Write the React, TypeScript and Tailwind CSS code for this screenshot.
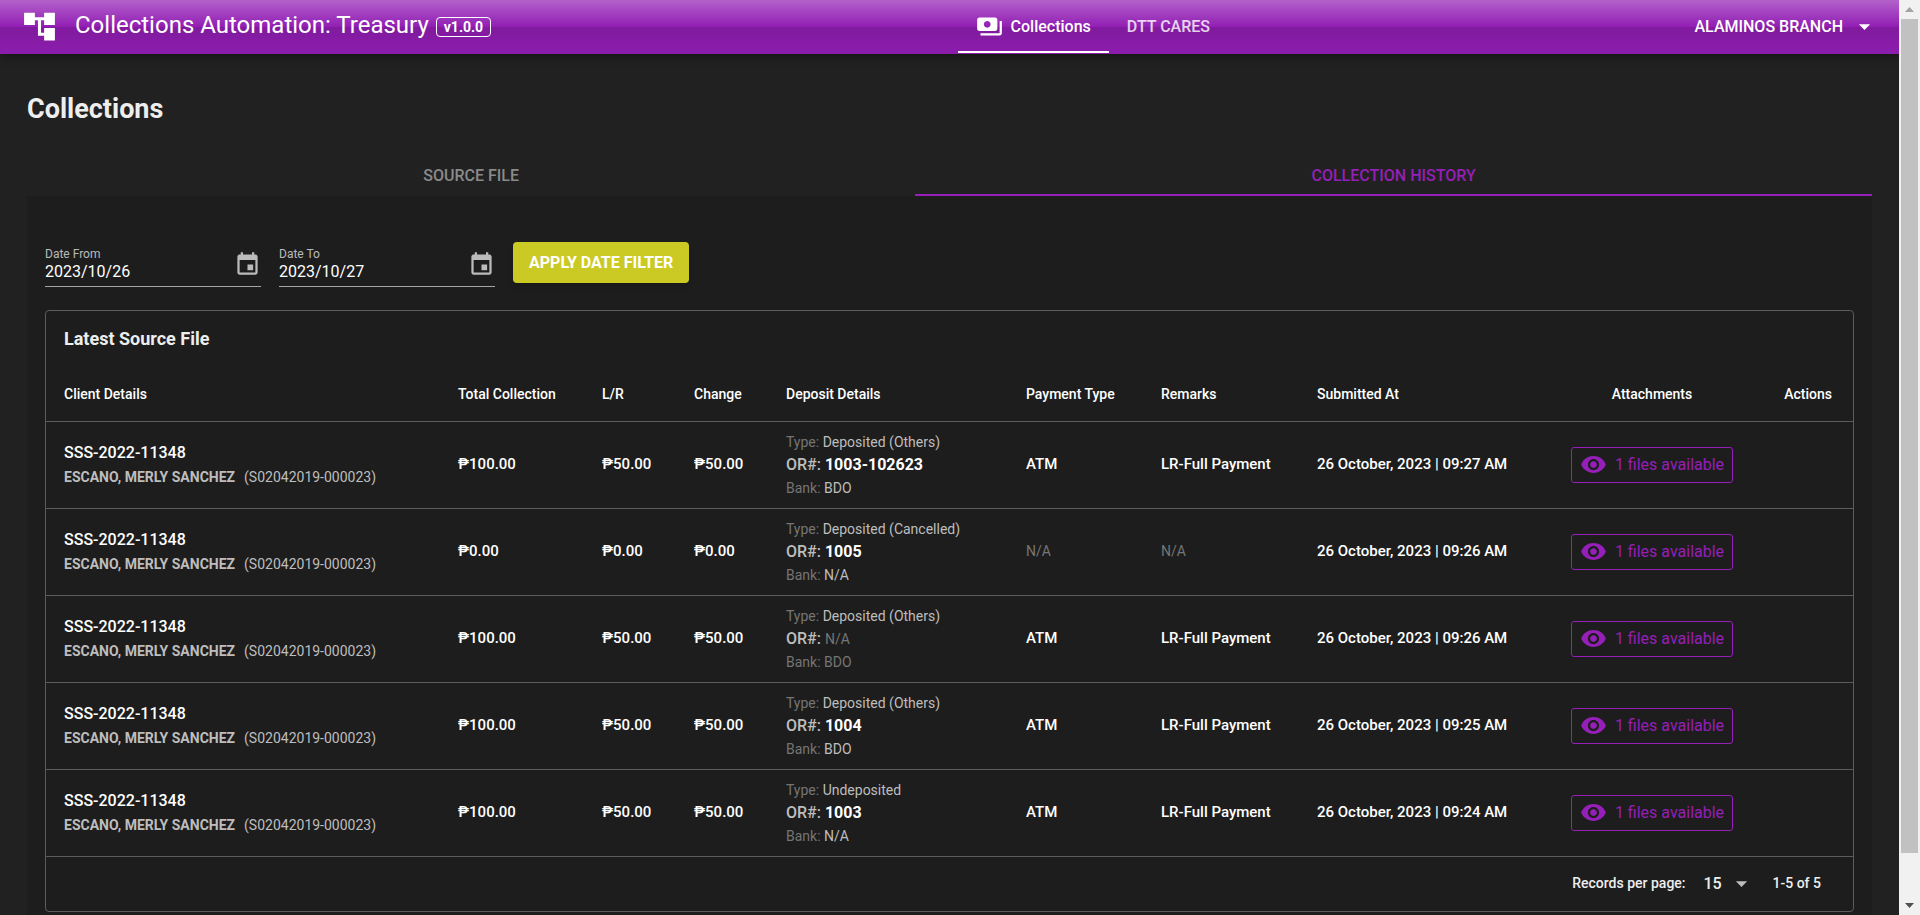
import { useState } from "react";

type Row = {
  total: string;
  lr: string;
  change: string;
  type: string;
  or: string | null;
  bank: string;
  payment: string | null;
  remarks: string | null;
  time: string;
};

const rows: Row[] = [
  { total: "₱100.00", lr: "₱50.00", change: "₱50.00", type: "Deposited (Others)", or: "1003-102623", bank: "BDO", payment: "ATM", remarks: "LR-Full Payment", time: "09:27 AM" },
  { total: "₱0.00", lr: "₱0.00", change: "₱0.00", type: "Deposited (Cancelled)", or: "1005", bank: "N/A", payment: null, remarks: null, time: "09:26 AM" },
  { total: "₱100.00", lr: "₱50.00", change: "₱50.00", type: "Deposited (Others)", or: null, bank: "BDO", payment: "ATM", remarks: "LR-Full Payment", time: "09:26 AM" },
  { total: "₱100.00", lr: "₱50.00", change: "₱50.00", type: "Deposited (Others)", or: "1004", bank: "BDO", payment: "ATM", remarks: "LR-Full Payment", time: "09:25 AM" },
  { total: "₱100.00", lr: "₱50.00", change: "₱50.00", type: "Undeposited", or: "1003", bank: "N/A", payment: "ATM", remarks: "LR-Full Payment", time: "09:24 AM" },
];

const columns = [
  { label: "Client Details", className: "w-[400px] pl-[18px] text-left" },
  { label: "Total Collection", className: "w-[144px] pl-3 text-left" },
  { label: "L/R", className: "w-[92px] pl-3 text-left" },
  { label: "Change", className: "w-[92px] pl-3 text-left" },
  { label: "Deposit Details", className: "w-[240px] pl-3 text-left" },
  { label: "Payment Type", className: "w-[135px] pl-3 text-left" },
  { label: "Remarks", className: "w-[156px] pl-3 text-left" },
  { label: "Submitted At", className: "w-[244px] pl-3 text-left" },
  { label: "Attachments", className: "w-[206px] text-center" },
  { label: "Actions", className: "w-[99px] pr-[22px] text-right" },
];

function Icon({ d, className }: { d: string; className: string }) {
  return (
    <svg viewBox="0 0 24 24" fill="currentColor" aria-hidden="true" className={className}>
      <path d={d} />
    </svg>
  );
}

const icons = {
  tree: "M22 11V3h-7v3H9V3H2v8h7V8h2v10h4v3h7v-8h-7v3h-2V8h2v3z",
  payments: "M19 14V6c0-1.100-.9-2-2-2H3c-1.100 0-2 .9-2 2v8c0 1.100.9 2 2 2h14c1.100 0 2-.9 2-2zm-9-1c-1.660 0-3-1.340-3-3s1.340-3 3-3 3 1.340 3 3-1.340 3-3 3zm13-6v11c0 1.100-.9 2-2 2H4v-2h17V7h2z",
  event: "M17 12h-5v5h5v-5zM16 1v2H8V1H6v2H5c-1.110 0-1.990.9-1.990 2L3 19c0 1.100.89 2 2 2h14c1.100 0 2-.9 2-2V5c0-1.100-.9-2-2-2h-1V1h-2zm3 18H5V8h14v11z",
  eye: "M12 4.500C7 4.500 2.730 7.610 1 12c1.730 4.390 6 7.500 11 7.500s9.270-3.110 11-7.500c-1.730-4.390-6-7.500-11-7.500zM12 17c-2.760 0-5-2.240-5-5s2.240-5 5-5 5 2.240 5 5-2.240 5-5 5zm0-8c-1.660 0-3 1.340-3 3s1.340 3 3 3 3-1.340 3-3-1.340-3-3-3z",
  down: "M7 10l5 5 5-5z",
};

function Header() {
  return (
    <header className="relative z-10 flex h-[54px] shrink-0 items-stretch justify-between bg-[#921eb4] bg-[linear-gradient(to_bottom,rgba(255,255,255,0.3),rgba(255,255,255,0)_50%,rgba(0,0,0,0.12)_51%,rgba(0,0,0,0.04))] px-[21px] pb-px text-white shadow-[0_2px_10px_rgba(0,0,0,0.45)]">
      <div className="flex items-center">
        <Icon d={icons.tree} className="size-[37px]" />
        <span className="ml-[17px] pb-1 text-2xl">Collections Automation: Treasury</span>
        <span className="ml-[7px] rounded-[4px] border border-white px-[7px] text-[14px] leading-[18px] font-bold">v1.0.0</span>
      </div>
      <nav className="flex items-stretch text-base font-medium">
        <a href="#collections" className="flex items-center gap-2 border-b-2 border-white px-[18px] pt-[2px]">
          <Icon d={icons.payments} className="size-[27px]" />
          Collections
        </a>
        <a href="#cares" className="flex items-center px-[18px] text-white/80">DTT CARES</a>
      </nav>
      <button type="button" className="flex items-center gap-2 text-base font-medium">
        ALAMINOS BRANCH
        <Icon d={icons.down} className="size-[27px]" />
      </button>
    </header>
  );
}

function DateField({ id, label, initial }: { id: string; label: string; initial: string }) {
  const [value, setValue] = useState(initial);
  return (
    <div className="flex h-[45px] w-[216px] items-center border-b border-white/60">
      <div className="min-w-0 flex-1">
        <label htmlFor={id} className="block text-[12px] leading-4 text-white/70">{label}</label>
        <input
          id={id}
          value={value}
          onChange={(e) => setValue(e.target.value)}
          className="block h-5 w-full bg-transparent text-base text-white outline-none"
        />
      </div>
      <button type="button" aria-label={`Pick ${label}`} className="text-white/70">
        <Icon d={icons.event} className="size-[27px]" />
      </button>
    </div>
  );
}

function Muted() {
  return <span className="text-[14px] font-normal text-[#757575]">N/A</span>;
}

function HistoryTable() {
  return (
    <section className="rounded-[4px] border border-[#5c5c5c]">
      <h2 className="px-[18px] pt-4 pb-[18px] text-[18px] leading-6 font-bold text-[#eee]">Latest Source File</h2>
      <table className="w-full table-fixed border-collapse text-white">
        <thead>
          <tr className="h-[52px] border-b border-[#5c5c5c]">
            {columns.map((c) => (
              <th key={c.label} scope="col" className={`text-[14px] font-medium ${c.className}`}>{c.label}</th>
            ))}
          </tr>
        </thead>
        <tbody>
          {rows.map((r, i) => (
            <tr key={i} className="h-[87px] border-b border-[#5c5c5c] text-[15px] font-medium">
              <td className="pl-[18px]">
                <div className="text-base leading-6">SSS-2022-11348</div>
                <div className="text-[14px] leading-6 font-bold text-[#bdbdbd]">
                  ESCANO, MERLY SANCHEZ
                  <span className="ml-[9px] font-normal">(S02042019-000023)</span>
                </div>
              </td>
              <td className="pl-3">{r.total}</td>
              <td className="pl-3">{r.lr}</td>
              <td className="pl-3">{r.change}</td>
              <td className="pl-3 text-[14px] leading-6 font-normal text-[#757575]">
                <div>Type: <span className="text-[#bdbdbd]">{r.type}</span></div>
                <div className="text-base leading-[22px] font-medium text-[#bdbdbd]">
                  OR#: {r.or ? <span className="font-bold text-white">{r.or}</span> : <Muted />}
                </div>
                <div>Bank: <span className={r.or ? "text-[#bdbdbd]" : ""}>{r.bank}</span></div>
              </td>
              <td className="pl-3">{r.payment ?? <Muted />}</td>
              <td className="pl-3">{r.remarks ?? <Muted />}</td>
              <td className="pl-3">26 October, 2023 | {r.time}</td>
              <td className="text-center">
                <button type="button" className="inline-flex h-9 items-center gap-2 rounded-[3px] border border-[#951fb8] px-2 align-middle text-base font-normal text-[#951fb8]">
                  <Icon d={icons.eye} className="size-[27px]" />
                  1 files available
                </button>
              </td>
              <td />
            </tr>
          ))}
        </tbody>
      </table>
      <footer className="flex h-[54px] items-center justify-end pr-8 text-[14px] font-medium text-[#eee]">
        <label htmlFor="per-page">Records per page:</label>
        <div className="ml-[18px] flex items-center">
          <select id="per-page" defaultValue="15" className="w-[24px] appearance-none bg-transparent text-base font-medium outline-none">
            <option>15</option>
            <option>25</option>
            <option>50</option>
          </select>
          <Icon d={icons.down} className="size-[27px] text-[#bdbdbd]" />
        </div>
        <span className="ml-[18px]">1-5 of 5</span>
      </footer>
    </section>
  );
}

function ScrollRail() {
  return (
    <div aria-hidden="true" className="relative z-20 flex w-[21px] shrink-0 flex-col items-center bg-[#f1f1f1]">
      <svg viewBox="0 0 21 19" className="h-[19px] w-[21px] shrink-0"><path d="M6 12h9l-4.500-5z" fill="#a3a3a3" /></svg>
      <div className="w-[17px] flex-[834] bg-[#c1c1c1]" />
      <div className="flex-[43]" />
      <svg viewBox="0 0 21 19" className="h-[19px] w-[21px] shrink-0"><path d="M6 7h9l-4.500 5z" fill="#505050" /></svg>
    </div>
  );
}

export default function App() {
  return (
    <div className="flex h-screen overflow-hidden bg-[#212121] font-[Roboto,sans-serif]">
      <div className="flex min-w-0 flex-1 flex-col">
        <Header />
        <main className="px-[27px] pt-[37px]">
          <h1 className="text-[27px] leading-9 font-bold text-[#eee]">Collections</h1>
          <div role="tablist" className="mt-[27px] flex text-base font-medium">
            <button type="button" role="tab" aria-selected="false" className="h-[42px] flex-auto border-b-2 border-transparent px-[18px] pt-1 text-[#8a8a8a]">SOURCE FILE</button>
            <button type="button" role="tab" aria-selected="true" className="h-[42px] flex-auto border-b-2 border-[#951fb8] px-[18px] pt-1 text-[#951fb8]">COLLECTION HISTORY</button>
          </div>
          <div className="bg-[#1d1d1d] px-[18px] pt-[46px] pb-8">
            <form className="mb-[23px] flex items-start gap-[18px]" onSubmit={(e) => e.preventDefault()}>
              <DateField id="date-from" label="Date From" initial="2023/10/26" />
              <DateField id="date-to" label="Date To" initial="2023/10/27" />
              <button type="submit" className="h-[41px] rounded-[4px] bg-[#cbca25] px-4 text-base font-bold text-white shadow-md">APPLY DATE FILTER</button>
            </form>
            <HistoryTable />
          </div>
        </main>
      </div>
      <ScrollRail />
    </div>
  );
}
